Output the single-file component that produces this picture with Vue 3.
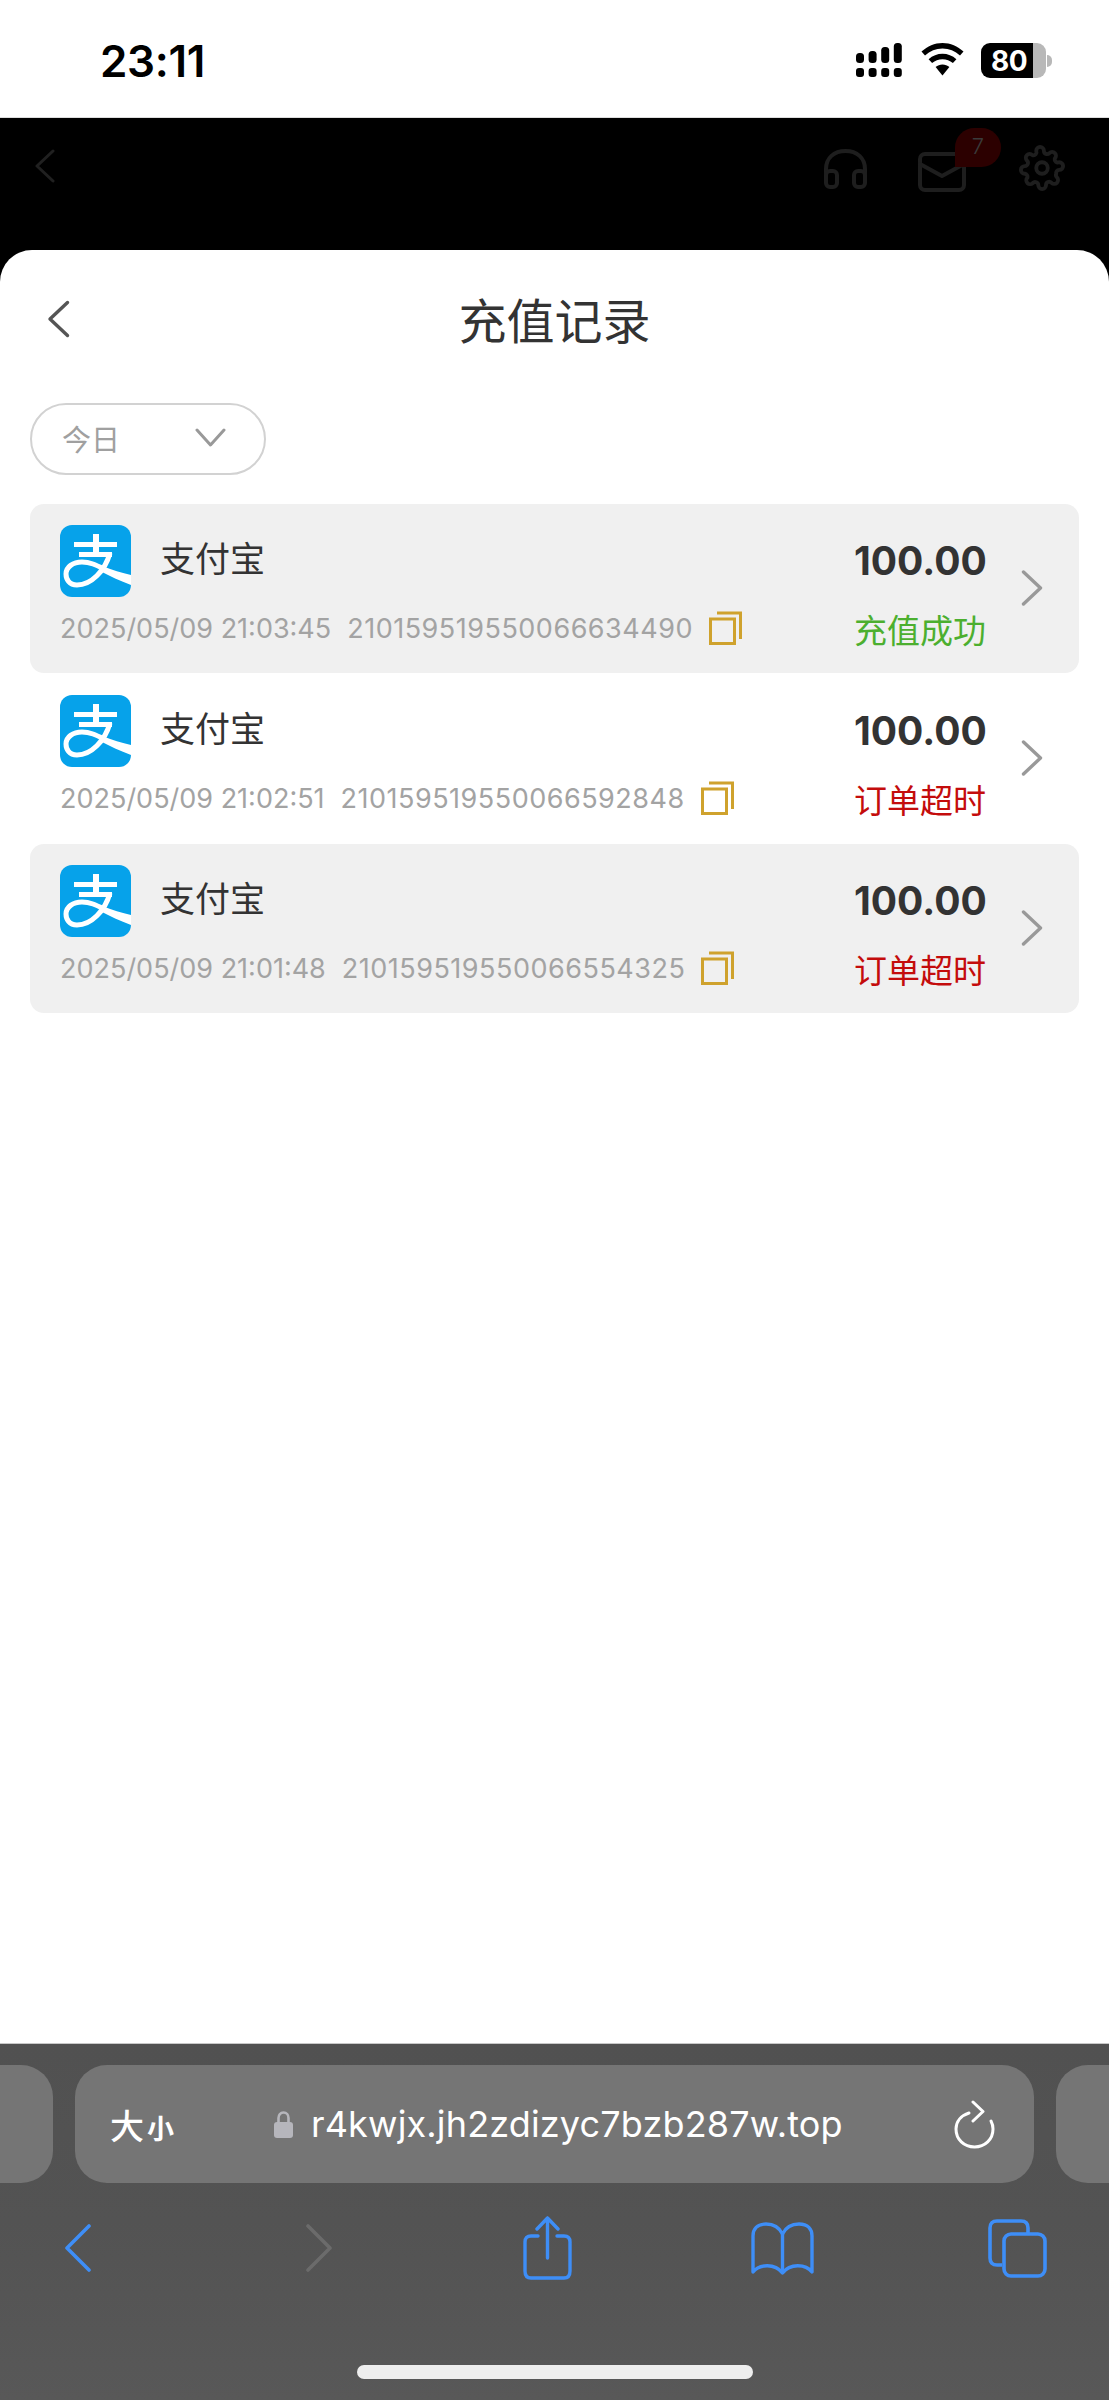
<template>
  <div class="phone">
    <!-- status bar -->
    <div class="status-bar">
      <span class="clock">23:11</span>
      <div class="status-icons">
        <svg class="signal" width="46" height="34" viewBox="0 0 46 34">
          <g fill="#000">
            <rect v-for="(top, i) in signalTops" :key="i" :x="i * 12.6" :y="top" width="8" :height="20 - top" rx="3.5" />
            <rect v-for="(top, i) in signalTops" :key="'d' + i" :x="i * 12.6" y="25" width="8" height="9" rx="3" />
          </g>
        </svg>
        <svg class="wifi" width="43" height="34" viewBox="0 0 43 34">
          <path d="M21.5 0C13.5 0 6.5 3.2 0.5 8.6L4 12.4C9 8 14.8 5.6 21.5 5.6S34 8 39 12.4L42.5 8.6C36.5 3.2 29.5 0 21.5 0Z" fill="#000" />
          <path d="M21.5 10.8C16.3 10.8 11.6 12.8 7.6 16.2L11.1 20C14.1 17.6 17.5 16.2 21.5 16.2S28.9 17.6 31.9 20L35.4 16.2C31.4 12.8 26.7 10.8 21.5 10.8Z" fill="#000" />
          <path d="M21.5 21.4C18.8 21.4 16.6 22.3 14.6 24L21.5 32.4L28.4 24C26.4 22.3 24.2 21.4 21.5 21.4Z" fill="#000" />
        </svg>
        <div class="battery">
          <span class="battery-num">80</span>
        </div>
        <span class="battery-nub"></span>
      </div>
    </div>

    <!-- dimmed page behind the sheet -->
    <div class="dim-header">
      <svg width="21" height="34" viewBox="0 0 21 34" fill="none" stroke="#202020" stroke-width="3" stroke-linecap="round" stroke-linejoin="round">
        <path d="M19 2L3 17L19 32" />
      </svg>
      <div class="dim-icons">
        <svg width="45" height="40" viewBox="0 0 45 40" fill="none" stroke="#1e1e1e" stroke-width="4" stroke-linecap="round" stroke-linejoin="round">
          <path d="M3 30V20C3 9 11 2 22.5 2S42 9 42 20V30" />
          <rect x="3" y="22" width="11" height="16" rx="4" />
          <rect x="31" y="22" width="11" height="16" rx="4" />
        </svg>
        <div class="mail">
          <svg width="48" height="40" viewBox="0 0 48 40" fill="none" stroke="#1e1e1e" stroke-width="4" stroke-linecap="round" stroke-linejoin="round">
            <rect x="2" y="2" width="44" height="36" rx="5" />
            <path d="M2 12L24 24L46 12" />
          </svg>
          <span class="badge">7</span>
        </div>
        <svg width="46" height="46" viewBox="0 0 24 24" fill="none" stroke="#1e1e1e" stroke-width="2" stroke-linecap="round" stroke-linejoin="round">
          <circle cx="12" cy="12" r="3" />
          <path d="M19.4 15a1.65 1.65 0 0 0 .33 1.82l.06.06a2 2 0 1 1-2.83 2.83l-.06-.06a1.65 1.65 0 0 0-2.82 1.17V21a2 2 0 1 1-4 0v-.09a1.65 1.65 0 0 0-2.82-1.11l-.06.06a2 2 0 1 1-2.83-2.83l.06-.06A1.65 1.65 0 0 0 3.09 15H3a2 2 0 1 1 0-4h.09a1.65 1.65 0 0 0 1.11-2.82l-.06-.06a2 2 0 1 1 2.83-2.83l.06.06A1.65 1.65 0 0 0 9 3.09V3a2 2 0 1 1 4 0v.09a1.65 1.65 0 0 0 2.82 1.17l.06-.06a2 2 0 1 1 2.83 2.83l-.06.06A1.65 1.65 0 0 0 20.91 9H21a2 2 0 1 1 0 4h-.09a1.65 1.65 0 0 0-1.51 2z" />
        </svg>
      </div>
    </div>

    <!-- sheet -->
    <div class="sheet-wrap">
      <div class="sheet">
        <div class="sheet-title">
          <svg class="back" width="23" height="38" viewBox="0 0 23 38" fill="none" stroke="#555" stroke-width="3.4" stroke-linecap="round" stroke-linejoin="round">
            <path d="M20.5 2.5L3 19L20.5 35.5" />
          </svg>
          <h1>充值记录</h1>
        </div>

        <div class="filter">
          <span>今日</span>
          <svg width="31" height="20" viewBox="0 0 31 20" fill="none" stroke="#999" stroke-width="3" stroke-linecap="round" stroke-linejoin="round">
            <path d="M2 2L15.5 17L29 2" />
          </svg>
        </div>

        <div class="records">
          <div v-for="(rec, i) in records" :key="rec.order" class="record" :class="{ shaded: i % 2 === 0 }">
            <div class="record-left">
              <div class="pay-name">
                <svg class="alipay" width="71" height="72" viewBox="0 0 71 72">
                  <rect width="71" height="72" fill="#06a2ea" />
                  <g fill="none" stroke="#fff">
                    <path d="M14 19.500H57M19 29.500H52" stroke-width="5" />
                    <path d="M36 9V30" stroke-width="6" />
                    <path d="M50 28C45 46 31 60 17 60C9 60 6 54 6 49C6 42 13 37 22 37C30 37 36 40 44 44" stroke-width="5" />
                  </g>
                  <path d="M42 41C52 45 62 48 71 50V60C60 56 50 51 40 46Z" fill="#fff" />
                </svg>
                <span>支付宝</span>
              </div>
              <div class="meta">
                <span>{{ rec.time }}</span>
                <span class="order">{{ rec.order }}</span>
                <svg class="copy" width="33" height="34" viewBox="0 0 33 34" fill="none" stroke="#cfa22d" stroke-width="3">
                  <rect x="1.5" y="8" width="24" height="24.5" />
                  <path d="M8 2H31.5V28" />
                </svg>
              </div>
            </div>
            <div class="record-right">
              <div class="amount">{{ rec.amount }}</div>
              <div class="state" :class="rec.ok ? 'ok' : 'fail'">{{ rec.state }}</div>
            </div>
            <svg class="arrow" width="22" height="36" viewBox="0 0 22 36" fill="none" stroke="#999" stroke-width="3.4" stroke-linecap="round" stroke-linejoin="round">
              <path d="M2.5 2L19.5 18L2.5 34" />
            </svg>
          </div>
        </div>
      </div>
    </div>

    <!-- safari bottom bar -->
    <div class="browser">
      <div class="tabs">
        <div class="side-tab left"></div>
        <div class="url-bar">
          <span class="aa">大<small>小</small></span>
          <svg class="lock" width="19" height="28" viewBox="0 0 19 28">
            <path d="M4.5 13V8C4.5 4.8 6.5 2.5 9.500 2.500S14.500 4.800 14.500 8V13" fill="none" stroke="#b6b6bc" stroke-width="2.600" />
            <rect y="12" width="19" height="16" rx="3" fill="#b6b6bc" />
          </svg>
          <span class="url">r4kwjx.jh2zdizyc7bzb287w.top</span>
          <svg class="reload" width="41" height="49" viewBox="0 0 41 49" fill="none" stroke="#fff" stroke-width="3" stroke-linecap="round" stroke-linejoin="round">
            <path d="M15 13C7 15.500 2 21.500 2 29C2 39.500 10 47 20.500 47S39 39.500 39 29C39 26 38.300 23.500 37 21" />
            <path d="M19 2L29 11.500L19 21" />
          </svg>
        </div>
        <div class="side-tab right"></div>
      </div>
      <div class="toolbar">
        <svg width="26" height="48" viewBox="0 0 26 48" fill="none" stroke="#3e8ef7" stroke-width="3.600" stroke-linecap="round" stroke-linejoin="round">
          <path d="M24 2L2 24L24 46" />
        </svg>
        <svg class="forward" width="27" height="48" viewBox="0 0 27 48" fill="none" stroke="#6b6b6b" stroke-width="3.600" stroke-linecap="round" stroke-linejoin="round">
          <path d="M3 2L25 24L3 46" />
        </svg>
        <svg width="49" height="64" viewBox="0 0 49 64" fill="none" stroke="#3e8ef7" stroke-width="3.400" stroke-linecap="round" stroke-linejoin="round">
          <path d="M15 20H8C4 20 2 22 2 26V55C2 60 4 62 8 62H41C45 62 47 60 47 55V26C47 22 45 20 41 20H34" />
          <path d="M24.500 42V2M14 13L24.500 2L35 13" />
        </svg>
        <svg width="63" height="53" viewBox="0 0 63 53" fill="none" stroke="#3e8ef7" stroke-width="3.400" stroke-linecap="round" stroke-linejoin="round">
          <path d="M31.500 12C28 5 23 2 15 2C6 2 2 7 2 14V50C8 42 24 41 31.500 51C39 41 55 42 61 50V14C61 7 57 2 48 2C40 2 35 5 31.500 12Z" />
          <path d="M31.500 12V50" />
        </svg>
        <svg width="59" height="59" viewBox="0 0 59 59" fill="none" stroke="#3e8ef7" stroke-width="3.600" stroke-linejoin="round">
          <path d="M14 46H9C4.500 46 2 43.500 2 39V9C2 4.500 4.500 2 9 2H33C37.500 2 40 4.500 40 9V14" />
          <rect x="16" y="15" width="41" height="42" rx="7" />
        </svg>
      </div>
      <div class="home-indicator"></div>
    </div>
  </div>
</template>

<script setup>
const signalTops = [10, 8, 4, 0]

const records = [
  { time: '2025/05/09 21:03:45', order: '210159519550066634490', amount: '100.00', state: '充值成功', ok: true },
  { time: '2025/05/09 21:02:51', order: '210159519550066592848', amount: '100.00', state: '订单超时', ok: false },
  { time: '2025/05/09 21:01:48', order: '210159519550066554325', amount: '100.00', state: '订单超时', ok: false },
]
</script>

<style scoped>
.phone {
  width: 1109px;
  height: 2400px;
  display: flex;
  flex-direction: column;
  overflow: hidden;
  background: #fff;
  font-family: Inter, "Noto Sans CJK SC", sans-serif;
}

.status-bar {
  height: 117px;
  flex: none;
  display: flex;
  align-items: flex-start;
  justify-content: space-between;
  padding: 43px 57px 0 100px;
  box-sizing: border-box;
  background: #fff;
}

.clock {
  font-size: 44px;
  line-height: 36px;
  font-weight: 600;
  letter-spacing: -0.3px;
  color: #000;
}

.status-icons {
  display: flex;
  align-items: flex-start;
}

.wifi {
  margin-left: 19px;
}

.battery {
  width: 65px;
  height: 35px;
  margin-left: 17px;
  border-radius: 9px;
  background: linear-gradient(90deg, #000 52px, #b8b8b8 52px);
  display: flex;
  align-items: center;
  padding-left: 10px;
  box-sizing: border-box;
}

.battery-num {
  font-size: 28px;
  font-weight: 700;
  color: #fff;
  letter-spacing: -0.5px;
}

.battery-nub {
  width: 5px;
  height: 12px;
  margin: 12px 0 0 1px;
  border-radius: 0 5px 5px 0;
  background: #b8b8b8;
}

.dim-header {
  height: 133px;
  flex: none;
  display: flex;
  justify-content: space-between;
  align-items: flex-start;
  padding: 31px 44px 0 34px;
  box-sizing: border-box;
  background: #000;
  border-top: 1px solid #ddd;
}

.dim-icons {
  display: flex;
  align-items: flex-start;
}

.mail {
  position: relative;
  margin: 3px 0 0 50px;
  height: 40px;
}

.mail + svg {
  margin: -4px 0 0 53px;
}

.badge {
  position: absolute;
  left: 37px;
  top: -24px;
  width: 46px;
  height: 39px;
  border-radius: 20px 20px 20px 0;
  background: #2c0000;
  color: #3a3a3a;
  font-size: 22px;
  line-height: 36px;
  text-align: center;
  font-weight: 300;
}

.sheet-wrap {
  flex: 1;
  min-height: 0;
  background: #000;
}

.sheet {
  height: 100%;
  box-sizing: border-box;
  padding: 0 30px;
  background: #fff;
  border-radius: 32px 32px 0 0;
}

.sheet-title {
  height: 124px;
  display: flex;
  align-items: center;
  justify-content: center;
  position: relative;
}

.back {
  position: absolute;
  left: 17px;
  top: 50px;
}

.sheet-title h1 {
  margin: 0;
  font-size: 48px;
  font-weight: 400;
  color: #333;
  line-height: 60px;
  position: relative;
  top: 10px;
}

.filter {
  width: 236px;
  height: 72px;
  margin-top: 29px;
  box-sizing: border-box;
  display: flex;
  align-items: center;
  padding: 0 38px 3px 30px;
  justify-content: space-between;
  border: 2px solid #d2d2d2;
  border-radius: 36px;
  font-size: 29px;
  color: #a0a0a0;
}

.records {
  margin-top: 29px;
}

.record {
  height: 169px;
  margin-bottom: 1px;
  box-sizing: border-box;
  padding: 21px 0 0 30px;
  display: flex;
  border-radius: 14px;
  position: relative;
}

.record.shaded {
  background: #f0f0f0;
}

.record-left {
  flex: 1;
  min-width: 0;
}

.pay-name {
  display: flex;
  align-items: flex-start;
  font-size: 35px;
  color: #333;
}

.pay-name span {
  margin-left: 29px;
  line-height: 50px;
  margin-top: 9px;
}

.alipay {
  border-radius: 12px;
  flex: none;
}

.meta {
  display: flex;
  align-items: center;
  gap: 16px;
  margin-top: 13px;
  height: 36px;
  font-size: 27px;
  color: #a3a3a3;
  white-space: nowrap;
}

.order {
  letter-spacing: 0.5px;
}

.copy {
  flex: none;
}

.record-right {
  width: 130px;
  margin-right: 95px;
  flex: none;
  text-align: right;
  white-space: nowrap;
}

.amount {
  font-size: 39px;
  line-height: 48px;
  margin-top: 12px;
  font-weight: 700;
  color: #333;
}

.state {
  font-size: 33px;
  line-height: 44px;
  margin-top: 24px;
}

.state.ok {
  color: #4caf2f;
}

.state.fail {
  color: #c40c0c;
}

.arrow {
  position: absolute;
  right: 36px;
  top: 66px;
}

.browser {
  height: 357px;
  flex: none;
  box-sizing: border-box;
  border-top: 1px solid #c8c8c8;
  background: linear-gradient(#515151, #535353 50%, #585858);
  padding-top: 21px;
}

.tabs {
  display: flex;
  gap: 22px;
}

.side-tab {
  height: 118px;
  width: 53px;
  flex: none;
  background: #757575;
}

.side-tab.left {
  border-radius: 0 32px 32px 0;
}

.side-tab.right {
  border-radius: 32px 0 0 32px;
}

.url-bar {
  width: 959px;
  height: 118px;
  flex: none;
  box-sizing: border-box;
  display: flex;
  align-items: center;
  padding-left: 35px;
  border-radius: 32px;
  background: #757575;
  color: #fff;
}

.aa {
  font-size: 34px;
  font-weight: 500;
  width: 164px;
  flex: none;
}

.aa small {
  font-size: 27px;
  margin-left: 3px;
  font-weight: 700;
}

.lock {
  flex: none;
}

.url {
  font-family: Inter, sans-serif;
  font-size: 36px;
  letter-spacing: 0.15px;
  margin-left: 18px;
  width: 531px;
  white-space: nowrap;
  flex: none;
}

.reload {
  margin-left: 112px;
  flex: none;
}

.toolbar {
  display: grid;
  grid-template-columns: repeat(5, 235px);
  justify-items: center;
  align-items: center;
  margin: 33px 0 0 -40px;
  height: 64px;
}

.forward {
  margin-left: 12px;
}

.home-indicator {
  width: 396px;
  height: 14px;
  margin: 85px auto 0;
  border-radius: 7px;
  background: #eee;
}
</style>

<style>
html,
body {
  margin: 0;
  background: #fff;
}
</style>
